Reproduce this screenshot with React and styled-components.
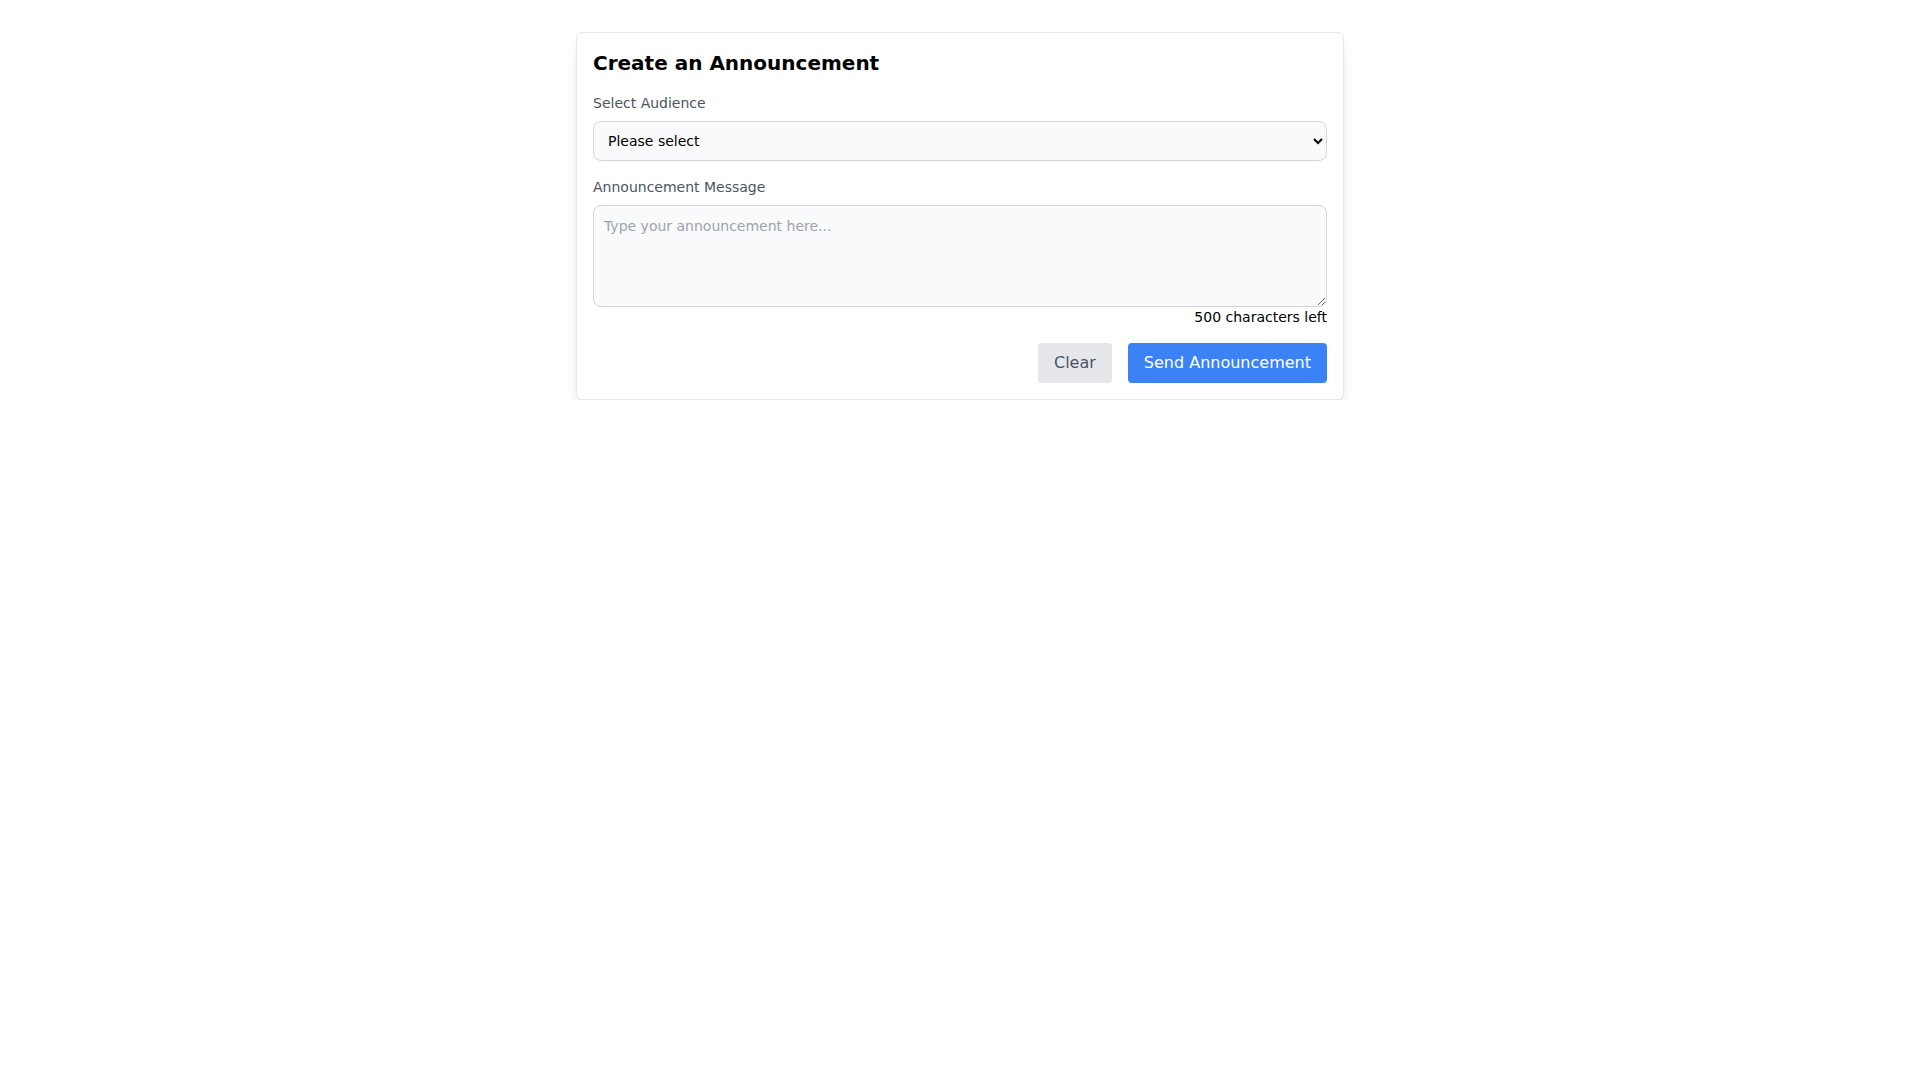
import React, { useState } from 'react';
import styled, { createGlobalStyle } from 'styled-components';

const GlobalStyle = createGlobalStyle`
  *, *::before, *::after {
    box-sizing: border-box;
  }
  body {
    margin: 0;
    background: #ffffff;
    font-family: "DejaVu Sans", sans-serif;
    color: #000000;
  }
`;

const MAX = 500;

const App = () => {
  const [message, setMessage] = useState('');
  const [audience, setAudience] = useState('');

  return (
    <>
      <GlobalStyle />
      <Card>
        <Title>Create an Announcement</Title>
        <Field>
          <Label htmlFor='audience'>Select Audience</Label>
          <Select
            id='audience'
            value={audience}
            onChange={(e) => setAudience(e.target.value)}
          >
            <option value=''>Please select</option>
            <option value='all'>All Users</option>
            <option value='students'>Students</option>
            <option value='teachers'>Teachers</option>
          </Select>
        </Field>
        <Field>
          <Label htmlFor='message'>Announcement Message</Label>
          <TextArea
            id='message'
            rows={4}
            maxLength={MAX}
            placeholder='Type your announcement here...'
            value={message}
            onChange={(e) => setMessage(e.target.value)}
          />
          <Counter>{MAX - message.length} characters left</Counter>
        </Field>
        <Actions>
          <Button
            $variant='secondary'
            onClick={() => {
              setMessage('');
              setAudience('');
            }}
          >
            Clear
          </Button>
          <Button $variant='primary'>Send Announcement</Button>
        </Actions>
      </Card>
    </>
  );
};

export default App;

const Card = styled.div`
  width: 768px;
  margin: 32px auto 0;
  padding: 16px;
  background: #ffffff;
  border: 1px solid #e5e7eb;
  border-radius: 6px;
  box-shadow: 0 10px 15px -3px rgba(0, 0, 0, 0.1), 0 4px 6px -4px rgba(0, 0, 0, 0.1);
`;

const Title = styled.h2`
  margin: 0 0 16px;
  font-size: 20px;
  line-height: 28px;
  font-weight: 700;
`;

const Field = styled.div`
  margin-bottom: 16px;
`;

const Label = styled.label`
  display: block;
  margin-bottom: 8px;
  font-size: 14px;
  line-height: 20px;
  color: #4b5563;
`;

const Select = styled.select`
  display: block;
  width: 100%;
  height: 40px;
  padding: 0 10px;
  font-family: inherit;
  font-size: 14px;
  color: #000000;
  background-color: #f9fafb;
  border: 1px solid #d1d5db;
  border-radius: 8px;
`;

const TextArea = styled.textarea`
  display: block;
  width: 100%;
  padding: 10px;
  font-family: inherit;
  font-size: 14px;
  line-height: 20px;
  color: #000000;
  background-color: #f9fafb;
  border: 1px solid #d1d5db;
  border-radius: 8px;
  resize: vertical;
  &::placeholder {
    color: #9ca3af;
  }
`;

const Counter = styled.div`
  text-align: right;
  font-size: 14px;
  line-height: 20px;
`;

const Actions = styled.div`
  display: flex;
  justify-content: flex-end;
  gap: 16px;
`;

const Button = styled.button`
  padding: 8px 16px;
  font-family: inherit;
  font-size: 16px;
  line-height: 24px;
  border: none;
  border-radius: 4px;
  cursor: pointer;
  background: ${(p) => (p.$variant === 'primary' ? '#3b82f6' : '#e5e7eb')};
  color: ${(p) => (p.$variant === 'primary' ? '#ffffff' : '#4b5563')};
`;
